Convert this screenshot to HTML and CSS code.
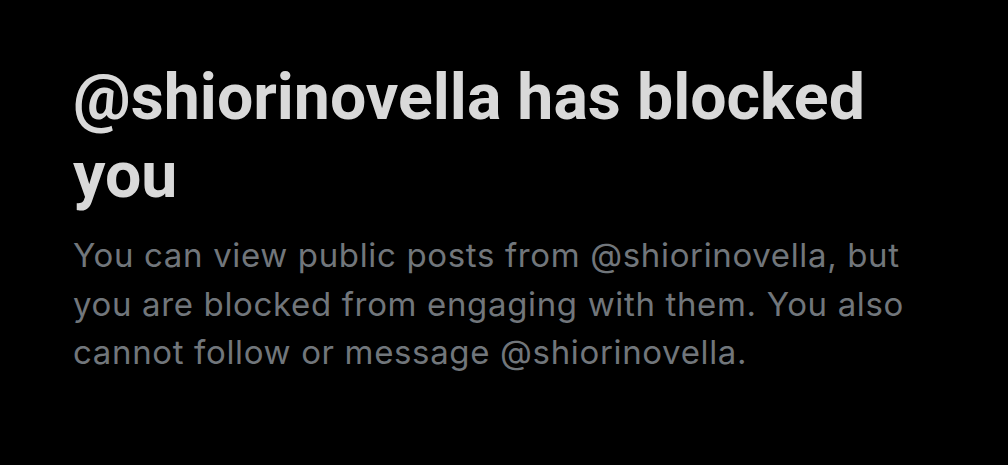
FILE: index.html
```html
<!DOCTYPE html>
<html lang="en">
<head>
    <meta charset="UTF-8">
    <meta name="viewport" content="width=device-width, initial-scale=1.0">
    <title>Blocked</title>
    <link rel="stylesheet" href="styles.css">
</head>
<body>
    <main class="blocked">
        <h1 class="blocked-title">@shiorinovella has blocked you</h1>
        <p class="blocked-text">You can view public posts from @shiorinovella, but you are blocked from engaging with them. You also cannot follow or message @shiorinovella.</p>
    </main>
</body>
</html>
```

FILE: styles.css
```css
body {
    margin: 0;
    background-color: #000;
    font-family: 'Inter', 'Liberation Sans', sans-serif;
}
.blocked {
    padding: 58px 0 0 73px;
    width: 860px;
}
.blocked-title {
    margin: 0;
    font-family: 'Roboto', 'Liberation Sans', sans-serif;
    font-size: 64.4px;
    line-height: 78px;
    font-weight: 700;
    color: #d9d9d9;
}
.blocked-text {
    margin: 17px 0 0;
    font-size: 33px;
    line-height: 48.5px;
    letter-spacing: 0.65px;
    color: #71767b;
}
```
